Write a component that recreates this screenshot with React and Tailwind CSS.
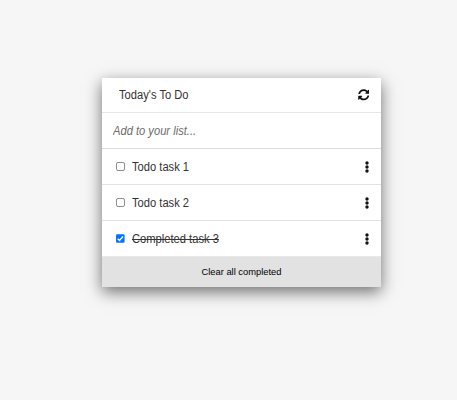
import React from 'react';

function Sync() {
  return (
    <svg className="h-[11.5px] w-[11.5px]" viewBox="0 0 512 512" fill="#111">
      <path d="M370.72 133.28C339.458 104.008 298.888 87.962 255.848 88c-77.458.068-144.328 53.178-162.791 126.85-1.344 5.363-6.122 9.15-11.651 9.15H24.103c-7.498 0-13.194-6.807-11.807-14.176C33.933 94.924 134.813 8 256 8c66.448 0 126.791 26.136 171.315 68.685L463.03 40.97C478.149 25.851 504 36.559 504 57.941V192c0 13.255-10.745 24-24 24H345.941c-21.382 0-32.09-25.851-16.971-40.971l41.75-41.749zM32 296h134.059c21.382 0 32.09 25.851 16.971 40.971l-41.75 41.75c31.262 29.273 71.835 45.319 114.876 45.28 77.418-.07 144.315-53.144 162.787-126.849 1.344-5.363 6.122-9.15 11.651-9.15h57.304c7.498 0 13.194 6.807 11.807 14.176C478.067 417.076 377.187 504 256 504c-66.448 0-126.791-26.136-171.315-68.685L48.97 471.03C33.851 486.149 8 475.441 8 454.059V320c0-13.255 10.745-24 24-24z" />
    </svg>
  );
}

function Dots() {
  return (
    <svg className="h-[12px] w-[4px]" viewBox="0 0 4 12" fill="#111">
      <circle cx="2" cy="2" r="1.7" />
      <circle cx="2" cy="6" r="1.7" />
      <circle cx="2" cy="10" r="1.7" />
    </svg>
  );
}

function Box({ checked }) {
  return checked ? (
    <svg className="h-[9px] w-[9px] shrink-0" viewBox="0 0 9 9">
      <rect width="8.6" height="8.6" y="0.2" rx="1.2" fill="#0075ff" />
      <path d="M1.7 4.7 3.5 6.5 7 2.5" fill="none" stroke="#fff" strokeWidth="1.3" />
    </svg>
  ) : (
    <span className="h-[9px] w-[9px] shrink-0 rounded-[2px] border border-[#8e8e8e] bg-white" />
  );
}

const tasks = [
  { text: 'Todo task 1', done: false },
  { text: 'Todo task 2', done: false },
  { text: 'Completed task 3', done: true },
];

export default function App() {
  return (
    <div className="flex h-[400px] w-[457px] items-start bg-[#f6f6f6] pl-[102px] pt-[78px] font-['Liberation_Sans',Arial,sans-serif] text-[12px] text-[#333]">
      <main className="w-[279px] bg-white shadow-[0_5px_15px_rgba(0,0,0,0.55)]">
        <header className="flex h-[35px] items-center justify-between border-b border-[#e6e6e6] pl-[17px] pr-[12px]">
          <h1 className="origin-left scale-x-[0.93]">Today's To Do</h1>
          <Sync />
        </header>
        <div className="flex h-[36px] items-center border-b border-[#dcdcdc] pl-[11px]">
          <input
            className="w-full origin-left scale-x-[0.93] bg-transparent italic outline-none placeholder:text-[#6c6c6c]"
            placeholder="Add to your list..."
          />
        </div>
        <ul>
          {tasks.map((t, i) => (
            <li
              key={t.text}
              className={
                i < tasks.length - 1
                  ? 'flex h-[36px] items-center border-b border-[#e3e3e3] pl-[14px] pr-[12px]'
                  : 'flex h-[36px] items-center border-b border-[#e9e9e9] pl-[14px] pr-[12px]'
              }
            >
              <Box checked={t.done} />
              <span className="ml-[7px] grow">
                <span
                  className={
                    t.done
                      ? 'inline-block origin-left scale-x-[0.93] line-through'
                      : 'inline-block origin-left scale-x-[0.93]'
                  }
                >
                  {t.text}
                </span>
              </span>
              <Dots />
            </li>
          ))}
        </ul>
        <button className="block h-[30px] w-full bg-[#e2e2e2] pt-px text-[9.35px] text-black">Clear all completed</button>
      </main>
    </div>
  );
}
